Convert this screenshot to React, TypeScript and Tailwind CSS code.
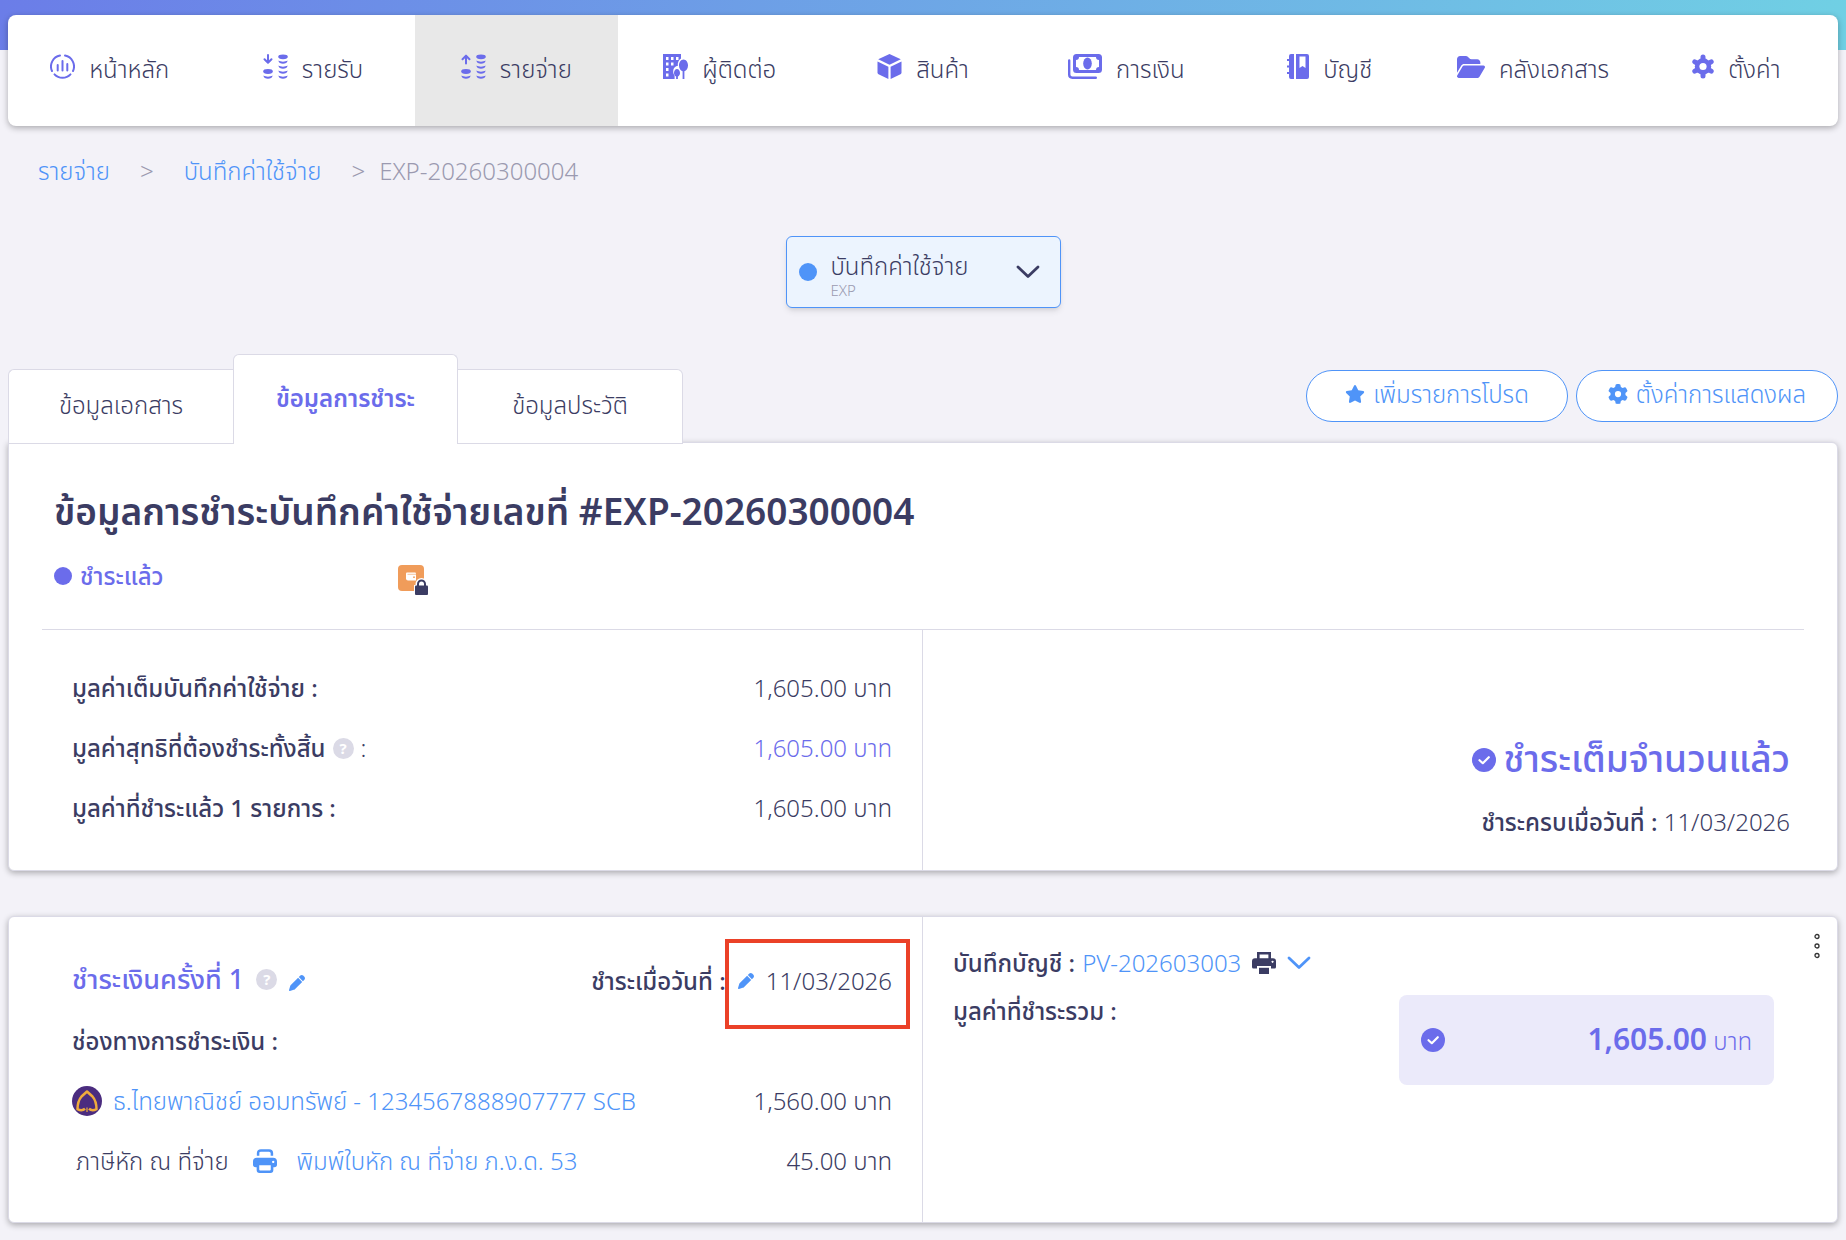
import React from 'react';
import { FaFolderOpen, FaGear, FaPen, FaStar } from 'react-icons/fa6';

interface IconProps {
  className?: string;
}

// Circle with a small bar chart in it
const DashboardIcon: React.FC<IconProps> = ({ className }) => (
  <svg viewBox="0 0 25 25" className={className} fill="none" stroke="currentColor" strokeWidth="2" strokeLinecap="round">
    <path d="M10 1.6A11 11 0 0 0 2 17" />
    <path d="M15 1.6A11 11 0 0 1 23 17" />
    <path d="M4.5 20.4a11 11 0 0 0 16 0" />
    <path d="M7.7 11v5.5M12.5 7v9.5M17.3 10v6.5" />
  </svg>
);

const CoinsIcon: React.FC<IconProps & { up?: boolean }> = ({ className, up }) => (
  <svg viewBox="0 0 25 25" className={className} fill="currentColor">
    <g fill="none" stroke="currentColor" strokeWidth="2" strokeLinecap="round" strokeLinejoin="round">
      {up ? <path d="M5 9.5V2M1.5 5.2 5 1.6l3.5 3.6" /> : <path d="M5 1v7.5M1.5 5.2 5 8.8l3.5-3.6" />}
    </g>
    <ellipse cx="5" cy="17.5" rx="4.8" ry="2.4" />
    <path d="M.4 21.500c2.500 1.500 6.700 1.500 9.200 0-.3 4.300-8.900 4.300-9.200 0z" />
    <ellipse cx="20" cy="2.8" rx="4.8" ry="2.4" />
    <path d="M15.400 6.500c2.500 1.500 6.700 1.500 9.200 0-.3 4.300-8.900 4.300-9.200 0z" />
    <path d="M15.400 11.500c2.500 1.500 6.700 1.500 9.200 0-.3 4.300-8.900 4.300-9.200 0z" />
    <path d="M15.400 16.500c2.500 1.500 6.700 1.500 9.200 0-.3 4.300-8.900 4.300-9.200 0z" />
    <path d="M15.400 21.500c2.500 1.500 6.700 1.500 9.200 0-.3 4.300-8.900 4.300-9.200 0z" />
  </svg>
);

const ContactIcon: React.FC<IconProps> = ({ className }) => (
  <svg viewBox="0 0 25 25" className={className} fill="currentColor">
    <path
      fillRule="evenodd"
      d="M0 0h18v4.500c-2.300 1.500-3.500 4-3.200 7.500-2.800 0-4.800 2.500-4.600 6 .1 1.500.6 2.600 1.400 3.400V25H0zM3 3v3h2.500V3zm5 0v3h2.500V3zm5 0v3h2.500V3zM3 8.500v3h2.500v-3zm5 0v3h2.500v-3zM3 14v3h2.500v-3zm0 5.500v3h2.500v-3z"
    />
    <path d="M20.500 5.500c2.600 0 4.500 2.900 4.500 6 0 2.900-1.500 5-3.600 5.700V25h-1.800v-7.800c-2.100-.7-3.600-2.800-3.600-5.700 0-3.100 1.900-6 4.500-6z" />
    <path d="M14 15c1.800 0 3 1.700 3 4 0 1.600-.8 2.900-2.100 3.400V25h-1.800v-2.600C11.800 21.900 11 20.600 11 19c0-2.300 1.200-4 3-4z" />
  </svg>
);

const BoxIcon: React.FC<IconProps> = ({ className }) => (
  <svg viewBox="0 0 25 25" className={className} fill="currentColor">
    <path d="M12.500 0 23.800 5.300 12.500 10.700 1.200 5.300z" />
    <path d="M.5 7.600 11.400 12.800V25L1.500 20.200Q.5 19.700.5 18.600z" />
    <path d="M24.500 7.600 13.600 12.800V25l9.900-4.800q1-.5 1-1.600z" />
  </svg>
);

const MoneyIcon: React.FC<IconProps> = ({ className }) => (
  <svg viewBox="0 0 34 25" className={className} fill="currentColor">
    <path
      fillRule="evenodd"
      d="M8.500 0h22Q34 0 34 3.500v12Q34 19 30.500 19h-22Q5 19 5 15.500v-12Q5 0 8.500 0zM11 3q0 3-3 3v7q3 0 3 3h17q0-3 3-3V6q-3 0-3-3z"
    />
    <ellipse cx="19.500" cy="9.500" rx="4.300" ry="6" />
    <path d="M1.200 6.500v14q0 3.200 3.200 3.200h23.400" fill="none" stroke="currentColor" strokeWidth="2.4" strokeLinecap="round" />
  </svg>
);

const LedgerIcon: React.FC<IconProps> = ({ className }) => (
  <svg viewBox="0 0 22 25" className={className} fill="currentColor">
    <path d="M4 0h3v25H4q-2 0-2-2v-3H0v-2h2v-4.500H0v-2h2V7H0V5h2V2q0-2 2-2z" />
    <path fillRule="evenodd" d="M9 0h11q2 0 2 2v21q0 2-2 2H9zm3.500 2.500V14l3-2 3 2V2.500z" />
  </svg>
);

const CogIcon: React.FC<IconProps> = ({ className }) => (
  <svg viewBox="0 0 22 25" className={className}>
    <path
      d="M11 3v19M2.800 7.800l16.400 9.400M19.200 7.800 2.800 17.200"
      fill="none"
      stroke="currentColor"
      strokeWidth="5"
      strokeLinecap="round"
    />
    <circle cx="11" cy="12.500" r="8.200" fill="currentColor" />
    <circle cx="11" cy="12.500" r="3.600" fill="#fff" />
  </svg>
);

const PrinterIcon: React.FC<IconProps> = ({ className }) => (
  <svg viewBox="0 0 25 25" className={className} fill="currentColor">
    <path d="M5.300 7V4.500Q5.300 1.500 8.300 1.500h8.400q3 0 3 3V7" fill="none" stroke="currentColor" strokeWidth="2.6" />
    <path
      fillRule="evenodd"
      d="M4 9h17q4 0 4 4v3.500Q25 19 22.200 19h-1v3q0 3-3 3H6.800q-3 0-3-3v-3h-1Q0 19 0 16.500V13q0-4 4-4zm2.500 8v4.300q0 1 1 1h10q1 0 1-1V17zM21 12.200a1.200 1.200 0 1 0 .1 0z"
    />
  </svg>
);

const PrintDarkIcon: React.FC<IconProps> = ({ className }) => (
  <svg viewBox="0 0 24 24" className={className} fill="currentColor">
    <path fillRule="evenodd" d="M5 1h14v7H5zM7.600 3.600V8h8.800V3.600z" />
    <path fillRule="evenodd" d="M3 7.200h18q3 0 3 3V16q0 1.500-1.500 1.500H19V15H5v2.500H1.500Q0 17.500 0 16v-5.800q0-3 3-3zM20.500 9.800a1 1 0 1 0 .1 0z" />
    <path d="M7 16.800h10V23H7z" />
  </svg>
);

const CheckCircleIcon: React.FC<IconProps> = ({ className }) => (
  <svg viewBox="0 0 24 24" className={className}>
    <circle cx="12" cy="12" r="12" fill="currentColor" />
    <path d="m7.500 12.200 3.300 3 6-6" fill="none" stroke="#fff" strokeWidth="2.2" strokeLinecap="round" strokeLinejoin="round" />
  </svg>
);

const ChevronIcon: React.FC<IconProps> = ({ className }) => (
  <svg viewBox="0 0 24 14" className={className} fill="none" stroke="currentColor" strokeWidth="2.8" strokeLinecap="round" strokeLinejoin="round">
    <path d="M2 2l10 9.500L22 2" />
  </svg>
);

const WalletLockIcon: React.FC<IconProps> = ({ className }) => (
  <svg viewBox="0 0 30 30" className={className}>
    <rect width="26" height="26" rx="4" fill="#f09c5a" />
    <path d="M9 7.500h8q1 0 1 1v7h-8q-2 0-2-2V8.500q0-1 1-1z" fill="#fff" />
    <path d="M9.500 9.300H18" stroke="#f09c5a" strokeWidth=".6" />
    <circle cx="16" cy="12.200" r=".9" fill="#f09c5a" />
    <path d="M16 20h1.500v-1a6 6 0 0 1 12 0v1.500H30V30H16z" fill="#fff" />
    <path d="M20 21v-2a3.500 3.500 0 0 1 7 0v2" fill="none" stroke="#3b3c63" strokeWidth="2" />
    <rect x="17" y="20.500" width="13" height="9.500" rx="1" fill="#3b3c63" />
  </svg>
);

const BankLogo: React.FC<IconProps> = ({ className }) => (
  <svg viewBox="0 0 30 30" className={className}>
    <circle cx="15" cy="15" r="15" fill="#4b2c7f" />
    <path
      d="M13 22.800Q10 25.500 5.500 23.200 5.600 15 9.500 10.500L15 5.500l5.500 5Q24.400 15 24.500 23.200 20 25.500 17 22.800"
      fill="none"
      stroke="#f0ab3c"
      strokeWidth="2.5"
      strokeLinejoin="round"
    />
    <path d="M15 21.500V26" stroke="#f0ab3c" strokeWidth="1.2" />
  </svg>
);

const HelpBadge = () => (
  <button
    type="button"
    aria-label="help"
    className="flex size-[21px] shrink-0 items-center justify-center rounded-full bg-[#dbdae6] text-[15px] leading-none font-bold text-white"
  >
    ?
  </button>
);

const menu = [
  { label: 'หน้าหลัก', icon: <DashboardIcon className="size-[25px]" /> },
  { label: 'รายรับ', icon: <CoinsIcon className="size-[25px]" /> },
  { label: 'รายจ่าย', icon: <CoinsIcon up className="size-[25px]" />, active: true },
  { label: 'ผู้ติดต่อ', icon: <ContactIcon className="size-[25px]" /> },
  { label: 'สินค้า', icon: <BoxIcon className="size-[25px]" /> },
  { label: 'การเงิน', icon: <MoneyIcon className="h-[25px] w-[34px]" /> },
  { label: 'บัญชี', icon: <LedgerIcon className="h-[25px] w-[22px]" /> },
  { label: 'คลังเอกสาร', icon: <FaFolderOpen className="size-7" /> },
  { label: 'ตั้งค่า', icon: <CogIcon className="h-[25px] w-[22px]" /> },
];

const App: React.FC = () => {
  return (
    <div className="min-h-screen bg-[#f3f2f8] bg-[linear-gradient(100deg,#6b7de8,#70d0e4)] bg-[length:100%_50px] bg-no-repeat px-2 pt-[15px] pb-4 font-['Noto_Sans','Noto_Sans_Thai',sans-serif] text-2xl leading-8 font-[350] text-[#3b3c63]">
      <nav className="grid h-[111px] grid-cols-9 overflow-hidden rounded-lg bg-white shadow-[0_2px_6px_rgba(0,0,0,0.3)]">
        {menu.map((item) => (
          <a
            key={item.label}
            href="#"
            className={`flex items-center justify-center gap-[14px] pb-1 whitespace-nowrap ${item.active ? 'bg-[#e8e8e8]' : ''}`}
          >
            <span className="mb-1 text-[#6b6ceb]">{item.icon}</span>
            {item.label}
          </a>
        ))}
      </nav>

      <div className="mt-[29px] flex items-center px-[30px] text-[#9b9ab0]">
        <a href="#" className="text-[#4f94f8]">รายจ่าย</a>
        <span className="mx-[30px]">&gt;</span>
        <a href="#" className="text-[#4f94f8]">บันทึกค่าใช้จ่าย</a>
        <span className="mr-[14px] ml-[30px]">&gt;</span>
        <span>EXP-20260300004</span>
      </div>

      <button
        type="button"
        className="mx-auto mt-[49px] flex h-[72px] w-[275px] items-center rounded-md border border-[#4f94f8] bg-[#ecf4fe] pr-5 pl-3 text-left shadow-md"
      >
        <span className="size-[18px] rounded-full bg-[#4f94f8]" />
        <span className="ml-[14px] flex-1 pt-1">
          <span className="block leading-8">บันทึกค่าใช้จ่าย</span>
          <span className="block text-[15px] leading-4 text-[#9b9ab0]">EXP</span>
        </span>
        <ChevronIcon className="w-6" />
      </button>

      <div className="mt-[46px] flex items-end">
        <div className="relative z-10 -mb-[2px] flex items-end">
          <button type="button" className="h-[75px] w-[225px] rounded-tl-md border border-r-0 border-[#dbdae6] bg-white pb-1">
            ข้อมูลเอกสาร
          </button>
          <button
            type="button"
            className="h-[90px] w-[225px] rounded-t-md border border-b-0 border-[#dbdae6] bg-white pb-1 font-semibold text-[#6b6ceb]"
          >
            ข้อมูลการชำระ
          </button>
          <button type="button" className="h-[75px] w-[225px] rounded-tr-md border border-l-0 border-[#dbdae6] bg-white pb-1">
            ข้อมูลประวัติ
          </button>
        </div>
        <div className="mb-5 ml-auto flex gap-2 text-[#4f94f8]">
          <button type="button" className="flex h-[52px] w-[262px] items-center justify-center gap-2 rounded-full border border-[#4f94f8] bg-white pb-1">
            <FaStar className="size-5" />
            เพิ่มรายการโปรด
          </button>
          <button type="button" className="flex h-[52px] w-[262px] items-center justify-center gap-2 rounded-full border border-[#4f94f8] bg-white pb-1">
            <FaGear className="size-5" />
            ตั้งค่าการแสดงผล
          </button>
        </div>
      </div>

      <section className="rounded-md rounded-tl-none border border-[#dbdae6] bg-white shadow-[0_2px_6px_rgba(0,0,0,0.3)]">
        <div className="px-[45px] pt-11">
          <h1 className="text-[37px] leading-[48px] font-semibold">ข้อมูลการชำระบันทึกค่าใช้จ่ายเลขที่ #EXP-20260300004</h1>
          <div className="mt-[22px] flex items-center">
            <span className="size-[18px] rounded-full bg-[#6b6ceb]" />
            <span className="ml-2 w-[318px] font-medium text-[#6b6ceb]">ชำระแล้ว</span>
            <WalletLockIcon className="mt-2 size-[30px]" />
          </div>
        </div>
        <div className="mx-[33px] mt-[34px] flex border-t border-[#dbdae6]">
          <dl className="flex w-1/2 flex-col gap-7 border-r border-[#dbdae6] px-[30px] pt-[42px] pb-[46px]">
            <div className="flex justify-between">
              <dt className="font-medium">มูลค่าเต็มบันทึกค่าใช้จ่าย :</dt>
              <dd>1,605.00 บาท</dd>
            </div>
            <div className="flex justify-between">
              <dt className="flex items-center gap-[7px]">
                <span className="font-medium">มูลค่าสุทธิที่ต้องชำระทั้งสิ้น</span>
                <HelpBadge />:
              </dt>
              <dd className="text-[#6b6ceb]">1,605.00 บาท</dd>
            </div>
            <div className="flex justify-between">
              <dt className="font-medium">มูลค่าที่ชำระแล้ว 1 รายการ :</dt>
              <dd>1,605.00 บาท</dd>
            </div>
          </dl>
          <div className="flex w-1/2 flex-col items-end justify-end pr-[14px] pb-8">
            <div className="flex items-center gap-2 text-[37px] leading-[48px] font-medium text-[#6b6ceb]">
              <CheckCircleIcon className="mt-1 size-6" />
              ชำระเต็มจำนวนแล้ว
            </div>
            <p className="mt-6">
              <span className="font-medium">ชำระครบเมื่อวันที่ :</span> 11/03/2026
            </p>
          </div>
        </div>
      </section>

      <section className="relative mt-[45px] flex rounded-md border border-[#dbdae6] bg-white shadow-[0_2px_6px_rgba(0,0,0,0.3)]">
        <div className="flex w-1/2 flex-col gap-7 border-r border-[#dbdae6] pt-12 pr-[30px] pb-[45px] pl-[63px]">
          <div className="flex items-start justify-between">
            <h2 className="flex items-center text-[27px] leading-7 font-medium text-[#6b6ceb]">
              <span className="mr-3">ชำระเงินครั้งที่ 1</span>
              <HelpBadge />
              <button type="button" aria-label="edit" className="mt-2 ml-3 text-[#4f94f8]">
                <FaPen className="size-4" />
              </button>
            </h2>
            <div className="relative flex items-center">
              <span className="mr-3 font-medium">ชำระเมื่อวันที่ :</span>
              <button type="button" aria-label="edit date" className="mr-3 text-[#4f94f8]">
                <FaPen className="size-4" />
              </button>
              11/03/2026
              <span className="pointer-events-none absolute -top-[26px] -right-[18px] h-[90px] w-[185px] border-4 border-[#eb4128]" />
            </div>
          </div>
          <h3 className="font-medium">ช่องทางการชำระเงิน :</h3>
          <div className="flex items-center justify-between">
            <a href="#" className="flex items-center gap-[11px] text-[#4f94f8]">
              <BankLogo className="size-[30px]" />
              ธ.ไทยพาณิชย์ ออมทรัพย์ - 1234567888907777 SCB
            </a>
            <span>1,560.00 บาท</span>
          </div>
          <div className="flex items-center justify-between">
            <div className="flex items-center pl-1">
              ภาษีหัก ณ ที่จ่าย
              <a href="#" className="ml-6 flex items-center gap-5 text-[#4f94f8]">
                <PrinterIcon className="size-6" />
                พิมพ์ใบหัก ณ ที่จ่าย ภ.ง.ด. 53
              </a>
            </div>
            <span>45.00 บาท</span>
          </div>
        </div>

        <div className="w-1/2 pt-[30px] pr-[63px] pl-[30px]">
          <div className="flex items-center">
            <span className="font-medium">บันทึกบัญชี :</span>
            <a href="#" className="ml-[7px] text-[#4f94f8]">PV-202603003</a>
            <button type="button" aria-label="print" className="ml-[11px]">
              <PrintDarkIcon className="size-6" />
            </button>
            <button type="button" aria-label="expand" className="ml-[11px] text-[#4f94f8]">
              <ChevronIcon className="w-6" />
            </button>
          </div>
          <div className="mt-4 flex items-start justify-between">
            <span className="font-medium">มูลค่าที่ชำระรวม :</span>
            <div className="flex h-[90px] w-[375px] items-center justify-between rounded-lg bg-[#ebeafa] px-[22px] text-[#6b6ceb]">
              <CheckCircleIcon className="size-6" />
              <span>
                <strong className="text-[30px] font-semibold">1,605.00</strong> บาท
              </span>
            </div>
          </div>
        </div>

        <button type="button" aria-label="more" className="absolute top-[15px] right-4">
          <svg viewBox="0 0 8 28" className="h-7 w-2" fill="none" stroke="#333" strokeWidth="1.3">
            <circle cx="4" cy="4.500" r="2" />
            <circle cx="4" cy="14" r="2" />
            <circle cx="4" cy="23.500" r="2" />
          </svg>
        </button>
      </section>
    </div>
  );
};

export default App;
